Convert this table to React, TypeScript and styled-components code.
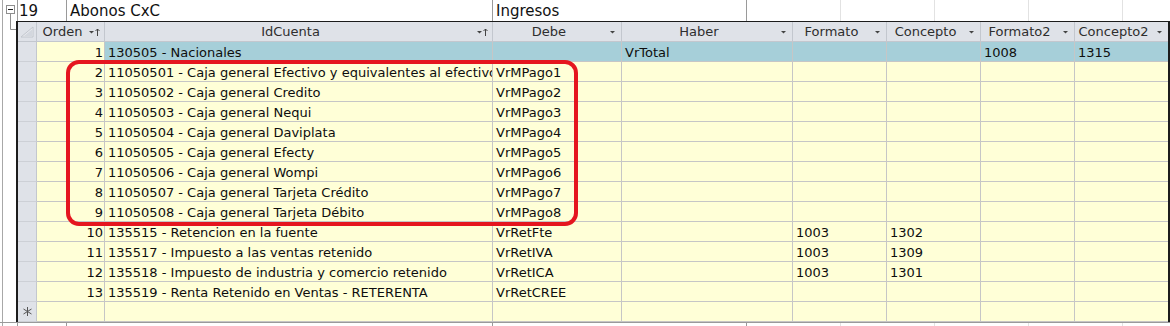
import * as React from 'react';
import styled, { createGlobalStyle } from 'styled-components';

interface Column {
	key: string;
	title: string;
	width: number;
	sorted?: boolean;
	align?: 'left' | 'right';
}

interface Row {
	orden: number;
	id: string;
	debe?: string;
	haber?: string;
	formato?: string;
	concepto?: string;
	formato2?: string;
	concepto2?: string;
	selected?: boolean;
}

const columns: Column[] = [
	{ key: 'orden', title: 'Orden', width: 68, sorted: true, align: 'right' },
	{ key: 'id', title: 'IdCuenta', width: 388, sorted: true },
	{ key: 'debe', title: 'Debe', width: 129 },
	{ key: 'haber', title: 'Haber', width: 171 },
	{ key: 'formato', title: 'Formato', width: 94 },
	{ key: 'concepto', title: 'Concepto', width: 94 },
	{ key: 'formato2', title: 'Formato2', width: 94 },
	{ key: 'concepto2', title: 'Concepto2', width: 93 },
];

const caja = ['Efectivo y equivalentes al efectivo', 'Credito', 'Nequi', 'Daviplata', 'Efecty', 'Wompi', 'Tarjeta Crédito', 'Tarjeta Débito'];

const rows: Row[] = [
	{ orden: 1, id: '130505 - Nacionales', haber: 'VrTotal', formato2: '1008', concepto2: '1315', selected: true },
	...caja.map((name, i) => ({
		orden: i + 2,
		id: `1105050${i + 1} - Caja general ${name}`,
		debe: `VrMPago${i + 1}`,
	})),
	{ orden: 10, id: '135515 - Retencion en la fuente', debe: 'VrRetFte', formato: '1003', concepto: '1302' },
	{ orden: 11, id: '135517 - Impuesto a las ventas retenido', debe: 'VrRetIVA', formato: '1003', concepto: '1309' },
	{ orden: 12, id: '135518 - Impuesto de industria y comercio retenido', debe: 'VrRetICA', formato: '1003', concepto: '1301' },
	{ orden: 13, id: '135519 - Renta Retenido en Ventas - RETERENTA', debe: 'VrRetCREE' },
];

const parentCells = [
	{ text: '19', width: 50, line: 'dark' },
	{ text: 'Abonos CxC', width: 426, line: 'dark' },
	{ text: 'Ingresos', width: 254, line: 'dark' },
	{ text: '', width: 94, line: 'light' },
	{ text: '', width: 94, line: 'light' },
	{ text: '', width: 94, line: 'light' },
	{ text: '', width: 94, line: 'light' },
	{ text: '', width: 48, line: 'none' },
];

const GlobalStyle = createGlobalStyle`
	html, body {
		margin: 0;
		padding: 0;
		background: #ffffff;
	}
	body {
		font-family: "DejaVu Sans", Verdana, sans-serif;
	}
`;

const Page = styled.div`
	position: relative;
	width: 1170px;
	height: 326px;
	overflow: hidden;
	background: #ffffff;
`;

const ParentRow = styled.div<{ $h: number; $top?: boolean }>`
	display: flex;
	height: ${p => p.$h}px;
	box-sizing: border-box;
	font-size: 15px;
	line-height: 23px;
	color: #111111;
	overflow: hidden;
	${p => p.$top ? 'border-top: 1px solid #9a9a9a;' : ''}
`;

const Gutter = styled.div<{ $w: number }>`
	flex: none;
	width: ${p => p.$w}px;
	margin-left: 2px;
	box-sizing: border-box;
	border-left: 1px solid #a8a8a8;

	svg {
		display: block;
	}
`;

const ParentCell = styled.div<{ $w: number; $line: string; $first?: boolean }>`
	flex: none;
	width: ${p => p.$w}px;
	box-sizing: border-box;
	padding-left: 3px;
	white-space: nowrap;
	overflow: hidden;
	border-right: 1px solid ${p => p.$line === 'dark' ? '#9a9a9a' : p.$line === 'light' ? '#e2e2e2' : 'transparent'};
	${p => p.$first ? 'border-left: 1px solid #9a9a9a; padding-left: 1px;' : ''}
`;

const SubRow = styled.div`
	display: flex;
`;

const Grid = styled.div`
	display: grid;
	grid-template-columns: 19px ${columns.map(c => `${c.width}px`).join(' ')};
	grid-auto-rows: 20px;
	border-top: 1px solid #1c1c1c;
	border-left: 2px solid #1c1c1c;
	border-right: 2px solid #1c1c1c;
	font-size: 13px;
`;

const HeaderCell = styled.div<{ $last?: boolean }>`
	display: flex;
	box-sizing: border-box;
	background: #dfe2e8;
	color: #2e2e2e;
	line-height: 19px;
	border-bottom: 1px solid #c3c7ce;
	border-right: ${p => p.$last ? 'none' : '1px solid #c3c7ce'};
	overflow: hidden;

	svg {
		display: block;
		flex: none;
	}
`;

const HeaderLabel = styled.span`
	flex: 1;
	text-align: center;
	white-space: nowrap;
	overflow: hidden;
`;

const Selector = styled.div<{ $header?: boolean }>`
	box-sizing: border-box;
	background: #dfe2e8;
	border-right: 1px solid #c3c7ce;
	border-bottom: 1px solid ${p => p.$header ? '#c3c7ce' : '#cdd0d6'};

	svg {
		display: block;
	}
`;

const Cell = styled.div<{ $selected?: boolean; $align?: string; $last?: boolean }>`
	box-sizing: border-box;
	height: 20px;
	padding: 0 1px 0 3px;
	background: ${p => p.$selected ? '#a6cfd9' : '#ffffd7'};
	color: #0e0e0e;
	line-height: 21px;
	text-align: ${p => p.$align || 'left'};
	white-space: nowrap;
	overflow: hidden;
	border-bottom: 1px solid #c6c6c6;
	border-right: ${p => p.$last ? 'none' : '1px solid #c6c6c6'};
`;

const Highlight = styled.div`
	position: absolute;
	left: 66px;
	top: 60px;
	width: 512px;
	height: 166px;
	box-sizing: border-box;
	border: 4px solid #e5161f;
	border-radius: 13px;
	pointer-events: none;
`;

const ExpandIcon = () => (
	<svg width="14" height="21" viewBox="0 0 14 21">
		<line x1="7.5" y1="14" x2="7.5" y2="21" stroke="#8e8e8e" />
		<rect x="3.5" y="5.5" width="8" height="8" fill="#ffffff" stroke="#8e8e8e" />
		<line x1="5" y1="9.5" x2="10" y2="9.5" stroke="#222222" />
	</svg>
);

const Connector = () => (
	<svg width="13" height="12" viewBox="0 0 13 12">
		<path d="M7.5 0 V8.5 H13" fill="none" stroke="#8e8e8e" />
	</svg>
);

const MenuIcon = ({ sorted }: { sorted?: boolean }) => (
	<svg width="16" height="19" viewBox="0 0 16 19">
		{sorted ? (
			<>
				<path d="M1 9 H6 L3.5 11.5 Z" fill="#444444" />
				<path d="M9.5 7 V14" stroke="#444444" />
				<path d="M7.5 9 L9.5 7 L11.5 9" fill="none" stroke="#444444" />
			</>
		) : (
			<path d="M5 9 H10 L7.5 11.5 Z" fill="#444444" />
		)}
	</svg>
);

const SelectAllIcon = () => (
	<svg width="18" height="19" viewBox="0 0 18 19">
		<path d="M15 5 V15 H3 Z" fill="#e9ebef" stroke="#c2c6cd" />
		<path d="M14 7.5 V14 H6 Z" fill="#d3d7de" />
	</svg>
);

const NewRowIcon = () => (
	<svg width="18" height="19" viewBox="0 0 18 19">
		<g stroke="#555555" strokeWidth="1">
			<line x1="9.5" y1="5" x2="9.5" y2="14" />
			<line x1="5.5" y1="7" x2="13.5" y2="12" />
			<line x1="5.5" y1="12" x2="13.5" y2="7" />
		</g>
	</svg>
);

const value = (row: Row, key: string) => {
	const v = (row as any)[key];
	return v === undefined ? '' : String(v);
};

const App = () => (
	<Page>
		<GlobalStyle />
		<ParentRow $h={21}>
			<Gutter $w={15}>
				<ExpandIcon />
			</Gutter>
			{parentCells.map((c, i) => (
				<ParentCell key={i} $w={c.width} $line={c.line} $first={i === 0}>{c.text}</ParentCell>
			))}
		</ParentRow>
		<SubRow>
			<Gutter $w={14}>
				<Connector />
			</Gutter>
			<Grid>
				<Selector $header>
					<SelectAllIcon />
				</Selector>
				{columns.map((c, i) => (
					<HeaderCell key={c.key} $last={i === columns.length - 1}>
						<HeaderLabel>{c.title}</HeaderLabel>
						<MenuIcon sorted={c.sorted} />
					</HeaderCell>
				))}
				{rows.map(row => (
					<React.Fragment key={row.orden}>
						<Selector />
						{columns.map((c, i) => (
							<Cell
								key={c.key}
								$selected={row.selected && c.key !== 'orden'}
								$align={c.align}
								$last={i === columns.length - 1}
							>
								{value(row, c.key)}
							</Cell>
						))}
					</React.Fragment>
				))}
				<Selector>
					<NewRowIcon />
				</Selector>
				{columns.map((c, i) => (
					<Cell key={c.key} $last={i === columns.length - 1} />
				))}
			</Grid>
		</SubRow>
		<ParentRow $h={5} $top>
			<Gutter $w={15} />
			{parentCells.map((c, i) => (
				<ParentCell key={i} $w={c.width} $line={c.line} $first={i === 0} />
			))}
		</ParentRow>
		<Highlight />
	</Page>
);

export default App;
